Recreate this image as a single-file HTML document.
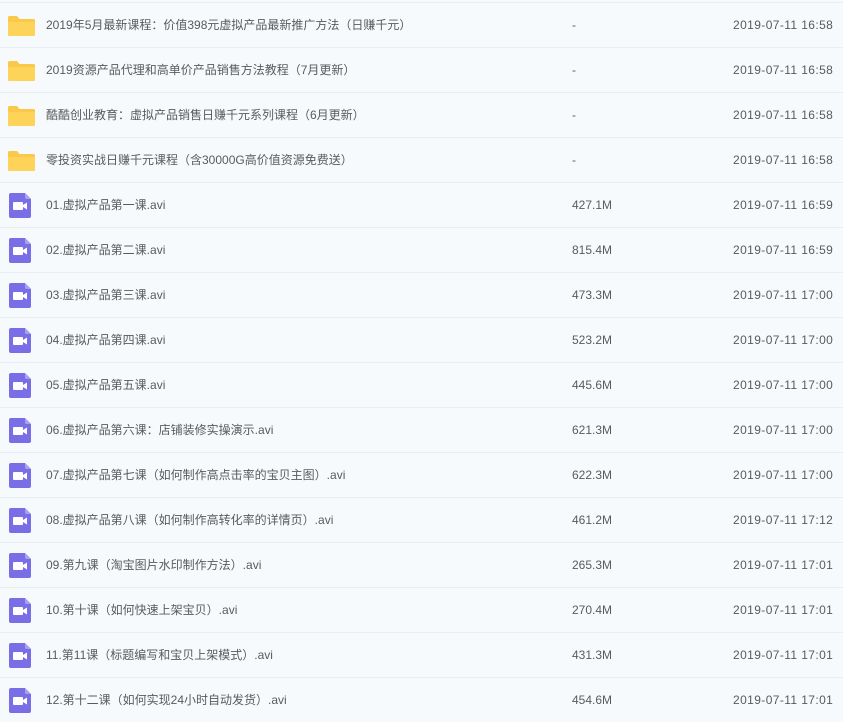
<!DOCTYPE html>
<html><head><meta charset="utf-8"><style>
body{margin:0;width:843px;height:719px;background:#f7fafd;overflow:hidden;font-family:"Liberation Sans","Noto Sans CJK SC",sans-serif;font-size:12px;color:#5a5a5a;}
.wrap{position:absolute;top:2px;left:0;width:843px;}
.row{height:44px;border-top:1px solid #eaeef3;position:relative;background:#f7fafd;}
.ic{position:absolute;left:8px;top:11px;}
.n,.s,.d{position:absolute;top:0;line-height:44px;white-space:nowrap;}
.n{left:46px;}
.s{left:572px;}
.d{left:733px;letter-spacing:0.4px;}
</style></head><body><div class="wrap">
<script>
const folder='<svg class="ic" width="27" height="24" viewBox="0 0 27 24"><path d="M0 3.5Q0 2 1.5 2H9l2.5 3H25.5Q27 5 27 6.5V20.5Q27 22 25.5 22H1.5Q0 22 0 20.5Z" fill="#fbc94a"/><path d="M0 8H27V20.5Q27 22 25.5 22H1.5Q0 22 0 20.5Z" fill="#fdd35a"/></svg>';
const vid='<svg class="ic" style="left:9px;top:10px" width="22" height="25" viewBox="0 0 22 25"><path d="M2 0H16L22 6V23Q22 25 20 25H2Q0 25 0 23V2Q0 0 2 0Z" fill="#7a6ee6"/><path d="M16 0V4.5Q16 6 17.5 6H22Z" fill="#a79ff0"/><rect x="4" y="9" width="10" height="8" rx="1" fill="#fff"/><path d="M14 12L18 9.5V16.5L14 14Z" fill="#fff"/></svg>';
const rows=[
["f","2019年5月最新课程：价值398元虚拟产品最新推广方法（日赚千元）","-","2019-07-11 16:58"],
["f","2019资源产品代理和高单价产品销售方法教程（7月更新）","-","2019-07-11 16:58"],
["f","酷酷创业教育：虚拟产品销售日赚千元系列课程（6月更新）","-","2019-07-11 16:58"],
["f","零投资实战日赚千元课程（含30000G高价值资源免费送）","-","2019-07-11 16:58"],
["v","01.虚拟产品第一课.avi","427.1M","2019-07-11 16:59"],
["v","02.虚拟产品第二课.avi","815.4M","2019-07-11 16:59"],
["v","03.虚拟产品第三课.avi","473.3M","2019-07-11 17:00"],
["v","04.虚拟产品第四课.avi","523.2M","2019-07-11 17:00"],
["v","05.虚拟产品第五课.avi","445.6M","2019-07-11 17:00"],
["v","06.虚拟产品第六课：店铺装修实操演示.avi","621.3M","2019-07-11 17:00"],
["v","07.虚拟产品第七课（如何制作高点击率的宝贝主图）.avi","622.3M","2019-07-11 17:00"],
["v","08.虚拟产品第八课（如何制作高转化率的详情页）.avi","461.2M","2019-07-11 17:12"],
["v","09.第九课（淘宝图片水印制作方法）.avi","265.3M","2019-07-11 17:01"],
["v","10.第十课（如何快速上架宝贝）.avi","270.4M","2019-07-11 17:01"],
["v","11.第11课（标题编写和宝贝上架模式）.avi","431.3M","2019-07-11 17:01"],
["v","12.第十二课（如何实现24小时自动发货）.avi","454.6M","2019-07-11 17:01"]];
document.write(rows.map(r=>'<div class="row">'+(r[0]=="f"?folder:vid)+'<span class="n">'+r[1]+'</span><span class="s">'+r[2]+'</span><span class="d">'+r[3]+'</span></div>').join(''));
</script>
</div></body></html>
